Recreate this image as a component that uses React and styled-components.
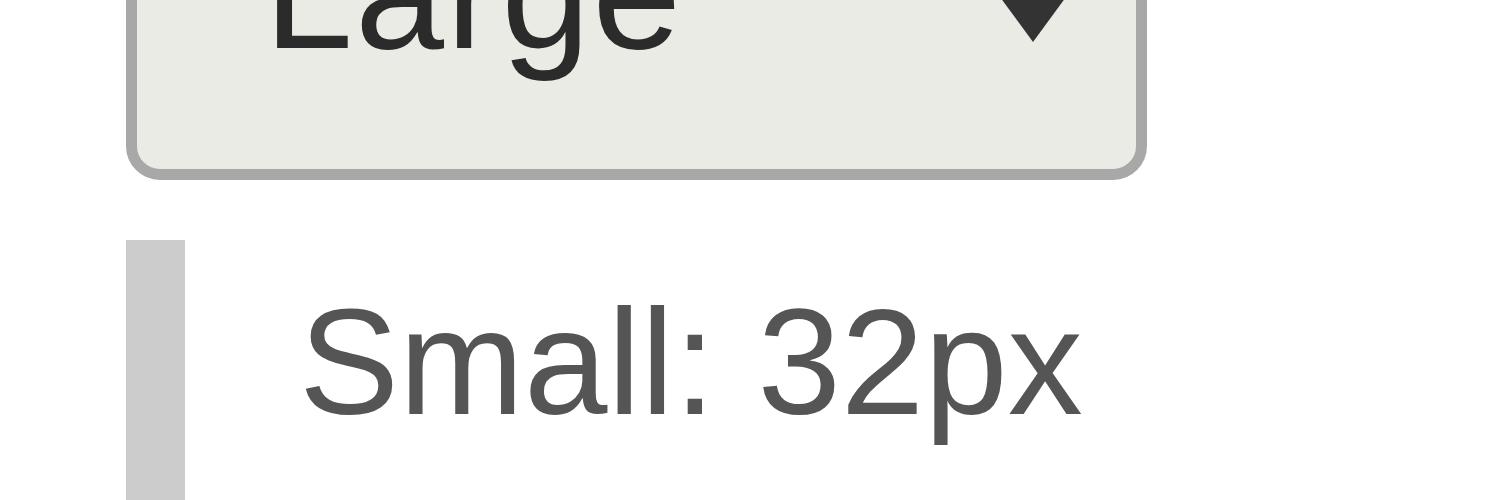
import React from "react";
import styled, { createGlobalStyle } from "styled-components";

const GlobalStyle = createGlobalStyle`
  html, body {
    margin: 0;
    padding: 0;
    background: #ffffff;
    overflow: hidden;
  }
  body {
    font-family: "Liberation Sans", Arial, sans-serif;
  }
`;

const Page = styled.div`
  width: 1500px;
  height: 500px;
  overflow: hidden;
  box-sizing: border-box;
  padding-left: 126px;
`;

// the view is cropped, so the top of the select sits above the window
const Stack = styled.div`
  margin-top: -184px;
  display: flex;
  flex-direction: column;
  gap: 60px;
`;

const SelectBox = styled.div`
  width: 1021px;
  box-sizing: border-box;
  display: flex;
  align-items: flex-start;
  padding: 80px 59px 90px 127px;
  border: 11px solid #a8a8a8;
  border-radius: 34px;
  background: #ebebe6;
`;

const SelectText = styled.span`
  font-size: 160px;
  letter-spacing: 2px;
  line-height: 172px;
  color: #2b2b2b;
`;

const Caret = styled.svg`
  margin-left: auto;
  width: 88px;
  height: 172px;
  flex-shrink: 0;
  fill: #333333;
`;

const Note = styled.div`
  border-left: 59px solid #cccccc;
  padding: 36px 0 200px 114px;
  font-size: 150px;
  line-height: 172px;
  color: #555555;
`;

const sizes = [
  { label: "Small", px: 32 },
  { label: "Large", px: 64 },
];

const App = () => {
  const current = sizes[1];
  return (
    <>
      <GlobalStyle />
      <Page>
        <Stack>
          <SelectBox>
            <SelectText>{current.label}</SelectText>
            <Caret viewBox="0 0 88 172">
              <polygon points="0,75 88,75 44,135" />
            </Caret>
          </SelectBox>
          <Note>
            {sizes[0].label}: {sizes[0].px}px
          </Note>
        </Stack>
      </Page>
    </>
  );
};

export default App;
